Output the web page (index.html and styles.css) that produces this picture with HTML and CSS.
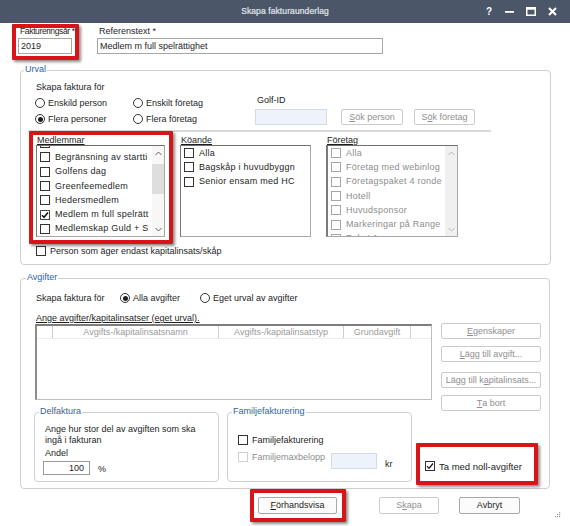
FILE: index.html
```html
<!DOCTYPE html>
<html lang="sv">
<head>
<meta charset="utf-8">
<title>Skapa fakturaunderlag</title>
<link rel="stylesheet" href="styles.css">
</head>
<body>
<div class="titlebar">
  <span></span>
  <span class="title">Skapa fakturaunderlag</span>
  <div class="controls">
    <span class="help">?</span>
    <svg width="9" height="9" viewBox="0 0 9 9"><rect x="0" y="4" width="9" height="1.8" fill="#fff"/></svg>
    <svg width="10" height="9" viewBox="0 0 10 9"><rect x="0.75" y="0.75" width="8.5" height="7.5" fill="none" stroke="#fff" stroke-width="1.5"/><rect x="0.5" y="0.5" width="9" height="2.2" fill="#fff"/></svg>
    <svg width="9" height="9" viewBox="0 0 9 9"><path d="M1 1L8 8M8 1L1 8" stroke="#fff" stroke-width="2"/></svg>
  </div>
</div>

<div class="toprow">
  <div class="field year">
    <div class="flabel">Faktureringsår *</div>
    <div class="input">2019</div>
  </div>
  <div class="field ref">
    <div class="flabel">Referenstext *</div>
    <div class="input">Medlem m full spelrättighet</div>
  </div>
</div>

<div class="group urval">
  <div class="legend">Urval</div>
  <div class="u-title">Skapa faktura för</div>
  <div class="u-row">
    <div class="radios">
      <div class="radio"><span class="rb"></span>Enskild person</div>
      <div class="radio"><span class="rb"></span>Enskilt företag</div>
      <div class="radio"><span class="rb on"></span>Flera personer</div>
      <div class="radio"><span class="rb"></span>Flera företag</div>
    </div>
    <div class="golf">
      <div class="glabel">Golf-ID</div>
      <div class="input blue"></div>
    </div>
    <div class="btn dis sok1"><u>S</u>ök person</div>
    <div class="btn dis sok2">S<u>ö</u>k företag</div>
  </div>
  <div class="sep"></div>
  <div class="lists">
    <div class="lcol med">
      <div class="llabel">Medlemmar</div>
      <div class="list">
        <div class="items scrolled">
          <div class="item"><span class="cb"></span>Alla</div>
          <div class="item"><span class="cb"></span>Begränsning av startti</div>
          <div class="item"><span class="cb"></span>Golfens dag</div>
          <div class="item"><span class="cb"></span>Greenfeemedlem</div>
          <div class="item"><span class="cb"></span>Hedersmedlem</div>
          <div class="item"><span class="cb on focus"><svg width="8" height="8" viewBox="0 0 8 8"><path d="M1 4.2L3 6.3L7 1.5" fill="none" stroke="#111" stroke-width="1.5"/></svg></span>Medlem m full spelrätt</div>
          <div class="item"><span class="cb"></span>Medlemskap Guld + S</div>
        </div>
        <div class="sbar">
          <svg class="arr" width="7" height="5" viewBox="0 0 7 5"><path d="M0.5 4L3.5 1L6.5 4" fill="none" stroke="#606060" stroke-width="1"/></svg>
          <div class="track"><div class="thumb"></div></div>
          <svg class="arr" width="7" height="5" viewBox="0 0 7 5"><path d="M0.5 1L3.5 4L6.5 1" fill="none" stroke="#606060" stroke-width="1"/></svg>
        </div>
      </div>
    </div>
    <div class="lcol koa">
      <div class="llabel">Köande</div>
      <div class="list">
        <div class="items">
          <div class="item"><span class="cb"></span>Alla</div>
          <div class="item"><span class="cb"></span>Bagskåp i huvudbyggn</div>
          <div class="item"><span class="cb"></span>Senior ensam med HC</div>
        </div>
      </div>
    </div>
    <div class="lcol fore">
      <div class="llabel">Företag</div>
      <div class="list disabled">
        <div class="items">
          <div class="item"><span class="cb"></span>Alla</div>
          <div class="item"><span class="cb"></span>Företag med webinlog</div>
          <div class="item"><span class="cb"></span>Företagspaket 4 ronde</div>
          <div class="item"><span class="cb"></span>Hotell</div>
          <div class="item"><span class="cb"></span>Huvudsponsor</div>
          <div class="item"><span class="cb"></span>Markeringar på Range</div>
          <div class="item"><span class="cb"></span>Paket 1</div>
        </div>
        <div class="sbar light">
          <svg class="arr" width="7" height="5" viewBox="0 0 7 5"><path d="M0.5 4L3.5 1L6.5 4" fill="none" stroke="#b5b5b5" stroke-width="1"/></svg>
          <div class="track"></div>
          <svg class="arr" width="7" height="5" viewBox="0 0 7 5"><path d="M0.5 1L3.5 4L6.5 1" fill="none" stroke="#b5b5b5" stroke-width="1"/></svg>
        </div>
      </div>
    </div>
  </div>
  <div class="check person"><span class="cb"></span>Person som äger endast kapitalinsats/skåp</div>
</div>

<div class="group avgifter">
  <div class="legend">Avgifter</div>
  <div class="a-row1">
    <span class="a-title">Skapa faktura för</span>
    <div class="radio alla"><span class="rb on"></span>Alla avgifter</div>
    <div class="radio"><span class="rb"></span>Eget urval av avgifter</div>
  </div>
  <div class="a-row2">
    <div class="a-left">
      <div class="a-label">Ange avgifter/kapitalinsatser (eget urval).</div>
      <div class="grid">
        <div class="ghead">
          <div class="gc c0"></div>
          <div class="gc c1">Avgifts-/kapitalinsatsnamn</div>
          <div class="gc c2">Avgifts-/kapitalinsatstyp</div>
          <div class="gc c3">Grundavgift</div>
          <div class="gc c4"></div>
        </div>
      </div>
    </div>
    <div class="a-btns">
      <div class="btn dis b1"><u>E</u>genskaper</div>
      <div class="btn dis b2"><u>L</u>ägg till avgift...</div>
      <div class="btn dis b3">Lägg till k<u>a</u>pitalinsats...</div>
      <div class="btn dis b4"><u>T</u>a bort</div>
    </div>
  </div>
  <div class="a-row3">
    <div class="group sub delf">
      <div class="legend">Delfaktura</div>
      <div class="d-text">Ange hur stor del av avgiften som ska<br>ingå i fakturan</div>
      <div class="d-andel">Andel</div>
      <div class="d-row"><div class="input num">100</div><span class="pct">%</span></div>
    </div>
    <div class="group sub fam">
      <div class="legend">Familjefakturering</div>
      <div class="check f1"><span class="cb"></span>Familjefakturering</div>
      <div class="f-row">
        <div class="check f2 dimmed"><span class="cb"></span>Familjemaxbelopp</div>
        <div class="input blue fmax"></div>
        <span class="kr">kr</span>
      </div>
    </div>
    <div class="check noll"><span class="cb on"><svg width="8" height="8" viewBox="0 0 8 8"><path d="M1 4.2L3 6.3L7 1.5" fill="none" stroke="#111" stroke-width="1.2"/></svg></span>Ta med noll-avgifter</div>
  </div>
</div>

<div class="footer">
  <div class="btn act forh"><u>F</u>örhandsvisa</div>
  <div class="btn dis skapa">S<u>k</u>apa</div>
  <div class="btn act avbryt">Avbryt</div>
</div>

<div class="mark m1"></div>
<div class="mark m2"></div>
<div class="mark m3"></div>
<div class="mark m4"></div>

<svg class="grip" width="6" height="6" viewBox="0 0 6 6"><rect x="4" y="0" width="1.2" height="1.2" fill="#9a9a9a"/><rect x="2" y="2" width="1.2" height="1.2" fill="#9a9a9a"/><rect x="4" y="2" width="1.2" height="1.2" fill="#9a9a9a"/><rect x="0" y="4" width="1.2" height="1.2" fill="#9a9a9a"/><rect x="2" y="4" width="1.2" height="1.2" fill="#9a9a9a"/><rect x="4" y="4" width="1.2" height="1.2" fill="#9a9a9a"/></svg>
</body>
</html>
```

FILE: styles.css
```css
* { box-sizing: border-box; }
html, body { margin: 0; padding: 0; }
body {
  width: 570px;
  height: 526px;
  overflow: hidden;
  position: relative;
  background: #ffffff;
  font-family: "Liberation Sans", Arial, sans-serif;
  font-size: 9px;
  line-height: 11px;
  color: #1e1e1e;
}
u { text-decoration: underline; text-underline-offset: 1px; }

/* title bar */
.titlebar {
  height: 23px;
  background: #4b5669;
  display: grid;
  grid-template-columns: 1fr auto 1fr;
  align-items: center;
}
.title {
  color: #e2e6ec;
  font-size: 8.5px;
  letter-spacing: 0.1px;
  -webkit-text-stroke: 0.2px #e2e6ec;
}
.controls {
  justify-self: end;
  display: flex;
  align-items: center;
  gap: 12px;
  padding-right: 13px;
}
.help {
  color: #fff;
  font-weight: bold;
  font-size: 10px;
  line-height: 10px;
  width: 8px;
  text-align: center;
}

/* top fields */
.toprow {
  display: flex;
  gap: 25px;
  margin: 3px 0 0 18px;
}
.flabel {
  padding-left: 2px;
  height: 11px;
  line-height: 11px;
  white-space: nowrap;
}
.year .flabel { font-size: 8.6px; letter-spacing: -0.4px; }
.year { width: 54px; }
.input {
  height: 16px;
  border: 1px solid #a6a6a6;
  background: #fff;
  padding: 0 2px;
  line-height: 14px;
  margin-top: 1px;
  white-space: nowrap;
  overflow: hidden;
}
.year .input { width: 54px; }
.ref .input { width: 286px; }
.input.blue { background: #eef2fb; border-color: #d4dbe8; }

/* groups */
.group {
  border: 1px solid #cfcfcf;
  border-radius: 4px;
}
.legend {
  display: table;
  background: #fff;
  color: #2f63ad;
  padding: 0 1px;
  height: 11px;
  line-height: 11px;
  margin-top: -7px;
}
.urval {
  margin: 16px 19px 0 20px;
  padding: 0 0 7px 15px;
}
.urval > .legend { margin-left: -12px; }
.u-title { margin-top: 7px; height: 11px; }
.u-row {
  display: flex;
  align-items: flex-start;
  margin-top: 2px;
}
.radios {
  display: grid;
  grid-template-columns: 98px 122px;
  grid-auto-rows: 16px;
  margin-left: -1px;
}
.radio {
  display: flex;
  align-items: center;
  gap: 3px;
  white-space: nowrap;
}
.rb {
  width: 10px;
  height: 10px;
  border: 1px solid #333;
  border-radius: 50%;
  background: #fff;
  position: relative;
  flex: none;
}
.rb.on::after {
  content: "";
  position: absolute;
  left: 1.5px;
  top: 1.5px;
  width: 5px;
  height: 5px;
  border-radius: 50%;
  background: #1e1e1e;
}
.golf { width: 72px; }
.glabel { padding-left: 2px; height: 11px; }
.golf .input { margin-top: 3px; }
.btn {
  height: 16px;
  border: 1px solid #cbcbcb;
  border-radius: 2px;
  background: #fff;
  display: flex;
  align-items: center;
  justify-content: center;
  white-space: nowrap;
}
.btn.dis { color: #8f8f8f; }
.btn.act { border-color: #a9a9a9; background: #fbfbfb; color: #1e1e1e; height: 17px; }
.sok1 { width: 62px; margin: 14px 0 0 14px; }
.sok2 { width: 61px; margin: 14px 0 0 11px; }
.sep {
  height: 2px;
  background: #d9d9d9;
  margin: 3px 0 0 -8px;
  width: 463px;
}

/* lists */
.lists {
  display: flex;
  gap: 15px;
  margin-top: 3px;
}
.llabel {
  height: 10px;
  line-height: 10px;
  padding-left: 1px;
  text-decoration: underline;
  text-underline-offset: 1px;
}
.med { width: 129px; }
.koa { width: 131px; }
.fore { width: 132px; }
.list {
  height: 92px;
  border: 1px solid #a8a8a8;
  border-top-color: #6f6f6f;
  border-left-color: #7a7a7a;
  background: #fff;
  position: relative;
  overflow: hidden;
  display: flex;
}
.fore .list { border-left-width: 2px; }
.items { flex: 1; min-width: 0; overflow: hidden; }
.items.scrolled { margin-top: -10px; }
.item {
  height: 14.3px;
  display: flex;
  align-items: center;
  gap: 5px;
  padding-left: 3px;
  white-space: nowrap;
  letter-spacing: 0.25px;
}
.cb {
  width: 10px;
  height: 10px;
  border: 1px solid #333;
  background: #fff;
  flex: none;
  display: flex;
  align-items: center;
  justify-content: center;
}
.cb.focus { outline: 1px dotted #555; outline-offset: -1px; }
.disabled .item { color: #8d8d8d; }
.disabled .cb { border-color: #a8a8a8; }
.sbar {
  width: 12px;
  flex: none;
  display: flex;
  flex-direction: column;
  align-items: center;
  background: #f7f7f7;
}
.sbar .arr { margin: 5px 0 4px; flex: none; }
.sbar .track { flex: 1; width: 100%; }
.thumb { width: 100%; height: 30px; margin-top: 4px; background: #dedede; }
.sbar.light { background: #f0f0f0; }

.check {
  display: flex;
  align-items: center;
  gap: 4px;
  white-space: nowrap;
}
.person { margin-top: 8px; height: 12px; }

/* avgifter */
.avgifter {
  margin: 13px 20px 0 20px;
  padding: 0 0 6px 14px;
}
.avgifter > .legend { margin-left: -9px; }
.a-row1 {
  display: flex;
  align-items: center;
  height: 12px;
  margin-top: 9px;
}
.a-title { width: 85px; padding-left: 1px; }
.radio.alla { width: 80px; }
.a-row2 { display: flex; margin-top: 9px; }
.a-left { width: 397px; }
.a-label {
  height: 10px;
  line-height: 10px;
  padding-left: 1px;
  text-decoration: underline;
  text-underline-offset: 1px;
}
.grid {
  margin-top: 1px;
  height: 76px;
  border: 1px solid #bdbdbd;
  border-top: 2px solid #7d7d7d;
  border-left: 2px solid #8c8c8c;
}
.ghead { display: flex; height: 13px; border-bottom: 1px solid #ececec; }
.gc {
  border-right: 1px solid #cfcfcf;
  color: #9b9b9b;
  text-align: center;
  line-height: 13px;
  white-space: nowrap;
  overflow: hidden;
}
.c0 { width: 16px; }
.c1 { width: 166px; }
.c2 { width: 125px; }
.c3 { width: 67px; }
.c4 { flex: 1; border-right: none; }
.a-btns { width: 100px; margin-left: 9px; }
.b1 { margin-top: 10px; }
.b2 { margin-top: 7px; }
.b3 { margin-top: 10px; }
.b4 { margin-top: 7px; }

.a-row3 { display: flex; align-items: flex-start; margin-top: 1px; }
.sub { width: 185px; height: 70px; padding-left: 10px; }
.sub > .legend { margin-left: -6px; }
.delf { margin-left: -1px; }
.fam { margin-left: 8px; }
.d-text { margin-top: 7px; }
.d-andel { margin-top: 2px; }
.d-row { display: flex; align-items: center; margin-top: 2px; margin-left: -2px; }
.input.num {
  width: 47px;
  height: 14px;
  line-height: 12px;
  margin-top: 0;
  text-align: right;
  padding-right: 5px;
  border-color: #9a9a9a;
}
.pct { margin-left: 8px; margin-top: 2px; }
.f1 { margin-top: 17px; height: 12px; }
.f-row { display: flex; align-items: flex-start; margin-top: 6px; }
.f2 { width: 93px; height: 10px; }
.dimmed { color: #8d8d8d; }
.dimmed .cb { border-color: #d0d0d0; }
.fmax { width: 46px; }
.kr { margin: 7px 0 0 8px; }
.noll { margin: 48px 0 0 13px; height: 12px; font-size: 9.5px; }

/* footer */
.footer {
  display: flex;
  margin-top: 8px;
  padding-left: 258px;
}
.forh { width: 79px; }
.skapa { width: 60px; margin-left: 42px; height: 17px; }
.avbryt { width: 61px; margin-left: 20px; }

/* red highlight annotations */
.mark {
  position: absolute;
  border: 4px solid #d8141b;
  border-radius: 1px;
  box-shadow: 2px 2px 3px rgba(0, 0, 0, 0.45);
}
.m1 { left: 12px; top: 24px; width: 67px; height: 36px; }
.m2 { left: 29px; top: 131px; width: 144px; height: 113px; }
.m3 { left: 416px; top: 443px; width: 122px; height: 42px; }
.m4 { left: 250px; top: 489px; width: 96px; height: 33px; }

.grip { position: absolute; left: 555px; top: 512px; }
```
